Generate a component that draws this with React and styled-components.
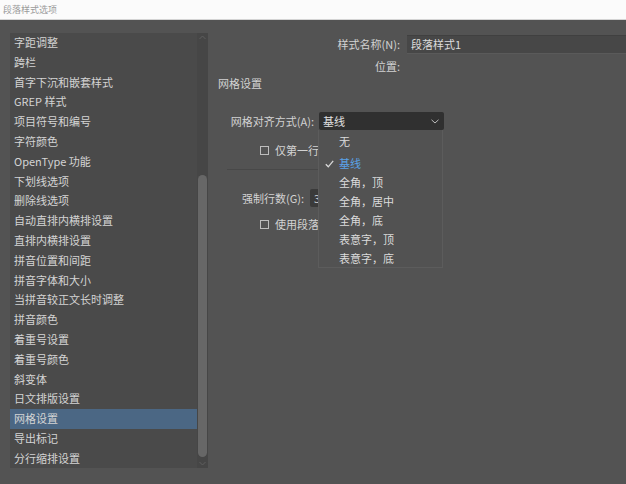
import React from 'react'
import styled, { createGlobalStyle } from 'styled-components'

const GlobalStyle = createGlobalStyle`
  html, body {
    margin: 0;
    padding: 0;
    background: #535353;
    font-family: "Noto Sans CJK SC", "Noto Sans", sans-serif;
    overflow: hidden;
  }
`

const Window = styled.div`
  width: 626px;
  height: 484px;
  display: flex;
  flex-direction: column;
  overflow: hidden;
`

const TitleBar = styled.div`
  height: 19px;
  flex: none;
  background: #fbfbfb;
  border-bottom: 1px solid #d4d4d4;
  display: flex;
  align-items: center;
  padding-left: 3px;
  font-size: 9px;
  color: #9a9a9a;
`

const Body = styled.div`
  flex: 1;
  display: flex;
  background: #535353;
  padding: 13px 0 16px 10px;
  gap: 10px;
  min-height: 0;
`

const ListPanel = styled.div`
  width: 198px;
  flex: none;
  display: flex;
  background: #4a4a4a;
`

const List = styled.div`
  flex: 1;
  display: flex;
  flex-direction: column;
`

const Item = styled.div`
  height: 19.8px;
  line-height: 19.8px;
  padding-left: 4px;
  font-size: 11px;
  color: #d4d4d4;
  white-space: nowrap;
  background: ${({ $active }) => ($active ? '#4b6784' : 'transparent')};
`

const Scrollbar = styled.div`
  width: 11px;
  flex: none;
  background: #464646;
  display: flex;
  flex-direction: column;
  align-items: center;
  padding: 2px 0;
  box-sizing: border-box;
`

const ScrollArrow = styled.svg`
  flex: none;
  width: 7px;
  height: 5px;
`

const ScrollSpace = styled.div`
  height: ${({ $h }) => $h}px;
  flex: none;
`

const Thumb = styled.div`
  flex: 1;
  width: 9px;
  margin-bottom: 4px;
  border-radius: 5px;
  background: #676767;
`

const Content = styled.div`
  flex: 1;
  display: flex;
  flex-direction: column;
  min-width: 0;
  position: relative;
`

const FormRow = styled.div`
  display: flex;
  align-items: center;
  gap: ${({ $gap }) => $gap || 7}px;
  height: ${({ $h }) => $h || 20}px;
  margin-top: ${({ $mt }) => $mt || 0}px;
  padding-left: ${({ $indent }) => $indent || 0}px;
`

const RightLabel = styled.div`
  width: ${({ $w }) => $w}px;
  flex: none;
  text-align: right;
  font-size: 11px;
  color: #d2d2d2;
  white-space: nowrap;
`

const TextInput = styled.div`
  flex: 1;
  height: 19px;
  background: #474747;
  border-top: 1px solid #404040;
  border-bottom: 1px solid #5a5a5a;
  box-sizing: border-box;
  display: flex;
  align-items: center;
  padding-left: 4px;
  font-size: 11px;
  color: #dcdcdc;
  margin-right: -30px;
`

const Heading = styled.div`
  font-size: 11px;
  line-height: 16px;
  color: #d2d2d2;
`

const Select = styled.div`
  width: 125px;
  height: 18px;
  flex: none;
  background: #303030;
  border-radius: 2px;
  display: flex;
  align-items: center;
  justify-content: space-between;
  padding: 0 5px 0 4px;
  box-sizing: border-box;
  font-size: 11px;
  color: #e0e0e0;
`

const CheckRow = styled.div`
  display: flex;
  align-items: center;
  gap: 6px;
  padding-left: 42px;
  height: 20px;
  margin-top: ${({ $mt }) => $mt || 0}px;
  font-size: 11px;
  color: #d2d2d2;
  white-space: nowrap;
`

const Box = styled.span`
  width: 9px;
  height: 9px;
  border: 1px solid #bdbdbd;
  box-sizing: border-box;
  flex: none;
`

const Divider = styled.div`
  height: 1px;
  width: 215px;
  margin: 9px 0 0 9px;
  background: #484848;
`

const SmallInput = styled.div`
  width: 40px;
  height: 18px;
  background: #3a3a3a;
  border-radius: 2px;
  font-size: 11px;
  color: #cfcfcf;
  display: flex;
  align-items: center;
  padding-left: 4px;
  box-sizing: border-box;
`

const Menu = styled.div`
  position: absolute;
  left: 100px;
  top: 97px;
  width: 125px;
  height: 138px;
  box-sizing: border-box;
  background: #525252;
  border: 1px solid #5c5c5c;
  border-top: none;
  display: flex;
  flex-direction: column;
  padding-top: 2px;
`

const MenuItem = styled.div`
  height: 19.3px;
  display: flex;
  align-items: center;
  padding-left: 20px;
  position: relative;
  font-size: 11px;
  color: ${({ $checked }) => ($checked ? '#5aa2e8' : '#dcdcdc')};
`

const MenuSep = styled.div`
  height: 3px;
`

const Check = styled.svg`
  position: absolute;
  left: 6px;
  top: 6px;
  width: 9px;
  height: 8px;
`

const items = [
  '字距调整',
  '跨栏',
  '首字下沉和嵌套样式',
  'GREP 样式',
  '项目符号和编号',
  '字符颜色',
  'OpenType 功能',
  '下划线选项',
  '删除线选项',
  '自动直排内横排设置',
  '直排内横排设置',
  '拼音位置和间距',
  '拼音字体和大小',
  '当拼音较正文长时调整',
  '拼音颜色',
  '着重号设置',
  '着重号颜色',
  '斜变体',
  '日文排版设置',
  '网格设置',
  '导出标记',
  '分行缩排设置',
]

const options = ['全角，顶', '全角，居中', '全角，底', '表意字，顶', '表意字，底']

export default function App() {
  return (
    <Window>
      <GlobalStyle />
      <TitleBar>段落样式选项</TitleBar>
      <Body>
        <ListPanel>
          <List>
            {items.map((t) => (
              <Item key={t} $active={t === '网格设置'}>
                {t}
              </Item>
            ))}
          </List>
          <Scrollbar>
            <ScrollArrow viewBox="0 0 7 5">
              <path d="M0.5 4 L3.5 1 L6.5 4" fill="none" stroke="#5e5e5e" strokeWidth="1" />
            </ScrollArrow>
            <ScrollSpace $h={135} />
            <Thumb />
            <ScrollArrow viewBox="0 0 7 5">
              <path d="M0.5 1 L3.5 4 L6.5 1" fill="none" stroke="#5e5e5e" strokeWidth="1" />
            </ScrollArrow>
          </Scrollbar>
        </ListPanel>
        <Content>
          <FormRow $h={20} $mt={1}>
            <RightLabel $w={182}>样式名称(N):</RightLabel>
            <TextInput>段落样式1</TextInput>
          </FormRow>
          <FormRow $h={18} $mt={3}>
            <RightLabel $w={182}>位置:</RightLabel>
          </FormRow>
          <Heading>网格设置</Heading>
          <FormRow $h={18} $mt={21} $indent={10} $gap={5}>
            <RightLabel $w={86}>网格对齐方式(A):</RightLabel>
            <Select>
              基线
              <svg width="8" height="5" viewBox="0 0 8 5">
                <path d="M0.5 0.8 L4 4 L7.5 0.8" fill="none" stroke="#bcbcbc" strokeWidth="1" />
              </svg>
            </Select>
          </FormRow>
          <CheckRow $mt={10}>
            <Box />
            仅第一行
          </CheckRow>
          <Divider />
          <FormRow $h={18} $mt={19} $indent={24} $gap={6}>
            <RightLabel $w={62}>强制行数(G):</RightLabel>
            <SmallInput>3</SmallInput>
          </FormRow>
          <CheckRow $mt={7}>
            <Box />
            使用段落
          </CheckRow>
          <Menu>
            <MenuItem>无</MenuItem>
            <MenuSep />
            <MenuItem $checked>
              <Check viewBox="0 0 9 8">
                <path d="M0.8 4.2 L3.3 6.8 L8.2 0.8" fill="none" stroke="#d8d8d8" strokeWidth="1.3" />
              </Check>
              基线
            </MenuItem>
            {options.map((o) => (
              <MenuItem key={o}>{o}</MenuItem>
            ))}
          </Menu>
        </Content>
      </Body>
    </Window>
  )
}
